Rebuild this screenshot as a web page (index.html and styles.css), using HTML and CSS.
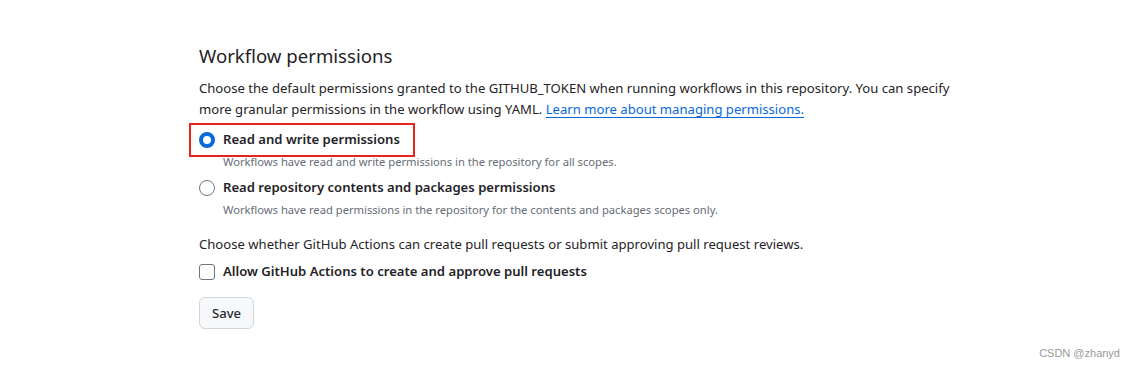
FILE: index.html
```html
<html>

<head>
	<title>Workflow permissions</title>
	<link rel="stylesheet" href="styles.css">
</head>

<body>
	<div class="page">
		<h2 class="subhead">Workflow permissions</h2>
		<p class="text">
			Choose the default permissions granted to the GITHUB_TOKEN when running workflows in this repository. You can specify
			<br>more granular permissions in the workflow using YAML. <a class="link" href="#">Learn more about managing permissions.</a>
		</p>

		<div class="option option--first">
			<label class="option__row">
				<input type="radio" name="perm" class="radio" checked>
				<span class="option__label">Read and write permissions</span>
			</label>
			<span class="highlight"></span>
		</div>
		<p class="option__note">Workflows have read and write permissions in the repository for all scopes.</p>

		<div class="option">
			<label class="option__row">
				<input type="radio" name="perm" class="radio">
				<span class="option__label">Read repository contents and packages permissions</span>
			</label>
		</div>
		<p class="option__note">Workflows have read permissions in the repository for the contents and packages scopes only.</p>

		<p class="text text--spaced">Choose whether GitHub Actions can create pull requests or submit approving pull request reviews.</p>

		<div class="option">
			<label class="option__row">
				<input type="checkbox" class="checkbox">
				<span class="option__label">Allow GitHub Actions to create and approve pull requests</span>
			</label>
		</div>

		<button type="button" class="button">Save</button>
	</div>
	<div class="watermark">CSDN @zhanyd</div>
</body>

</html>
```

FILE: styles.css
```css
* {
	margin: 0;
	padding: 0;
	box-sizing: border-box;
}

body {
	width: 1134px;
	height: 368px;
	position: relative;
	background-color: #fff;
	color: #1f2328;
	font-family: "Noto Sans", "Open Sans", sans-serif;
	font-size: 13.1px;
	overflow: hidden;
}

.page {
	padding: 41px 0 0 199px;
}

.subhead {
	font-size: 18.6px;
	font-weight: 400;
	line-height: 30px;
	margin-bottom: 7px;
}

.text {
	line-height: 21px;
}

.text--spaced {
	margin-top: 15px;
}

.link {
	color: #0969da;
	text-decoration: underline;
	text-underline-offset: 3px;
}

.option {
	position: relative;
	margin-top: 9px;
}

.option + .option__note + .option {
	margin-top: 6px;
}

.option__row {
	display: flex;
	align-items: center;
	gap: 8px;
	line-height: 21px;
}

.option__label {
	font-weight: 600;
}

.option__note {
	margin: 3px 0 0 24px;
	font-size: 11.2px;
	line-height: 18px;
	color: #656d76;
}

.radio {
	appearance: none;
	width: 16px;
	height: 16px;
	border: 1px solid #6e7781;
	border-radius: 50%;
	background: #fff;
}

.radio:checked {
	border: 4px solid #0969da;
}

.checkbox {
	appearance: none;
	width: 16px;
	height: 16px;
	border: 1px solid #6e7781;
	border-radius: 3px;
	background: #fff;
}

.text--spaced + .option {
	margin-top: 6px;
}

.highlight {
	position: absolute;
	left: -10px;
	top: -6px;
	width: 226px;
	height: 34px;
	border: 2px solid #e8231f;
}

.button {
	margin-top: 15px;
	height: 32px;
	padding: 0 12px;
	font-family: inherit;
	font-size: 13.1px;
	font-weight: 500;
	color: #24292f;
	background-color: #f6f8fa;
	border: 1px solid #d0d7de;
	border-radius: 6px;
}

.watermark {
	position: absolute;
	right: 14px;
	bottom: 9px;
	font-family: "Liberation Sans", Arial, sans-serif;
	font-size: 11px;
	color: #999;
}
```
